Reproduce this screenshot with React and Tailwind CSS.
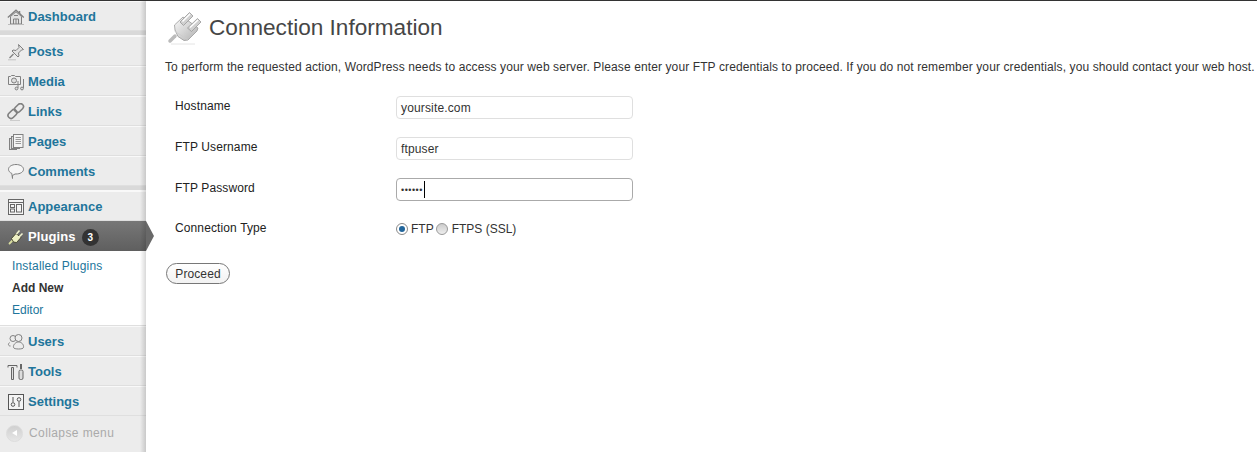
import React from 'react';

const stroke = '#808080';

const HomeIcon = () => (
  <svg width="18" height="18" viewBox="0 0 18 18" fill="none" stroke={stroke}>
    <path d="M.8 9.500 9 2.200l7.800 7.300" strokeWidth="1.300" />
    <path d="M12.500 3v3" strokeWidth="1.500" />
    <path d="M3.500 8.500v7.500h11V8.500L9 3.800z" fill="#e2e2e2" />
    <path d="M6.500 16v-5h5v5M9 11v5M7 7.500h4" />
    <path d="M1 16.500h16" stroke="#bbb" />
  </svg>
);
const PinIcon = () => (
  <svg width="18" height="18" viewBox="0 0 18 18" fill="none" stroke={stroke}>
    <path d="M11.500 1.500 16.500 6.500l-2 .5-3 3 .5 3-1 1-6-6 1-1 3 .5 3-3z" fill="#e2e2e2" />
    <path d="M6.500 11 2.500 15" strokeWidth="1.300" />
    <path d="M1 16.800h8" stroke="#c4c4c4" />
  </svg>
);
const MediaIcon = () => (
  <svg width="18" height="18" viewBox="0 0 18 18" fill="none" stroke={stroke}>
    <path d="M1.500 3.500h2l1-1h3l1 1h5v8h-12z" fill="#eee" />
    <circle cx="7" cy="7.500" r="2.500" fill="#ddd" />
    <path d="M16.500 6v9M11 8v7" />
    <circle cx="9.500" cy="15.500" r="1.400" fill="#ddd" />
    <circle cx="15" cy="15.500" r="1.400" fill="#ddd" />
  </svg>
);
const LinkIcon = () => (
  <svg width="20" height="18" viewBox="0 0 20 18" fill="none" stroke={stroke} strokeWidth="1.600">
    <rect x="10" y="0" width="6" height="10" rx="3" transform="rotate(45 13 5)" />
    <rect x="3.500" y="6" width="6" height="10" rx="3" transform="rotate(45 6.500 11)" />
    <path d="M4 17.500h10" stroke="#ccc" strokeWidth="1" />
  </svg>
);
const PagesIcon = () => (
  <svg width="16" height="16" viewBox="0 0 16 16" fill="none" stroke={stroke}>
    <rect x="1.500" y="4.500" width="7" height="11" fill="#ddd" />
    <rect x="3.500" y="2.500" width="8" height="12" fill="#ddd" />
    <rect x="5.500" y="0.500" width="9.500" height="13" fill="#f4f4f4" />
    <path d="M7.500 3.500h5.500M7.500 5.500h5.500M7.500 7.500h5.500M7.500 9.500h5.500" stroke="#999" />
  </svg>
);
const CommentIcon = () => (
  <svg width="18" height="18" viewBox="0 0 18 18" fill="none" stroke={stroke}>
    <path d="M9 1.500c4.200 0 7.500 2.100 7.500 4.800S13.200 11 9 11H8l-2.500 1.500v3L4.800 10.400C2.800 9.600 1.500 8.100 1.500 6.300 1.500 3.600 4.800 1.500 9 1.500z" fill="#f6f6f6" />
  </svg>
);
const AppearanceIcon = () => (
  <svg width="16" height="16" viewBox="0 0 16 16" fill="none" stroke="#666">
    <rect x="0.500" y="0.500" width="15" height="15" fill="#f4f4f4" />
    <path d="M.5 3.500h15" />
    <rect x="2.500" y="5.500" width="4" height="3" />
    <rect x="2.500" y="10" width="4" height="3" />
    <rect x="8.500" y="5.500" width="5" height="7.500" />
  </svg>
);
const SmallPlugIcon = () => (
  <svg width="16" height="16" viewBox="0 0 16 16" fill="none" stroke="#33331c" strokeWidth="0.800">
    <path d="M1.500 14.500 5 11" stroke="#d9dea0" strokeWidth="1.800" strokeLinecap="round" />
    <path d="M3.500 9.500 8 4.500l5 4-4.500 5-3 -.5z" fill="#eef0c4" />
    <path d="M8.500 5 11.500 1.500" stroke="#f2f4d0" strokeWidth="1.600" />
    <path d="M11 8 14.500 4.500" stroke="#f2f4d0" strokeWidth="1.600" />
  </svg>
);
const UsersIcon = () => (
  <svg width="18" height="18" viewBox="0 0 18 18" fill="none" stroke={stroke}>
    <circle cx="6" cy="5.500" r="3" fill="#ececec" />
    <circle cx="11.500" cy="5" r="3.500" fill="#ececec" />
    <path d="M2.500 9.500C1 11 1 13 3.500 13M11.500 9c3 0 5.500 2.500 5 5.500-.3 2-9.500 2-10 0-.6-2.500 2-5.500 5-5.500z" fill="#ececec" />
  </svg>
);
const ToolsIcon = () => (
  <svg width="18" height="18" viewBox="0 0 18 18" fill="none" stroke="#666">
    <path d="M1 2.500h9M1 2.500v2M10 2.500v2M4.500 4.500h2V16.500h-2z" fill="#ddd" />
    <path d="M14 1v5" strokeWidth="2" />
    <rect x="12" y="7" width="4" height="9.500" rx="1.500" fill="#ddd" />
  </svg>
);
const SettingsIcon = () => (
  <svg width="16" height="16" viewBox="0 0 16 16" fill="none" stroke="#555">
    <rect x="0.500" y="0.500" width="15" height="15" fill="#f4f4f4" />
    <path d="M5 3v5M11 8v5" />
    <circle cx="5" cy="10.500" r="1.800" />
    <circle cx="11" cy="5.500" r="1.800" />
  </svg>
);
const BigPlugIcon = () => (
  <svg width="36" height="36" viewBox="2 4 36 36" fill="none" stroke="#999" strokeWidth="0.800">
    <defs>
      <linearGradient id="plugBody" x1="0" y1="0" x2="1" y2="1">
        <stop offset="0" stopColor="#fafafa" />
        <stop offset="1" stopColor="#b0b0b0" />
      </linearGradient>
    </defs>
    <path d="M5 33 10 28" stroke="#bbb" strokeWidth="3.500" strokeLinecap="round" />
    <path d="M9.500 17 18 9l15 11-1 3-9 9-4 .5-6-4-3-6.500z" fill="url(#plugBody)" />
    <path d="M9.500 23 23 32" stroke="#ccc" />
    <path d="M15 14 24.500 4.500l3.500 3.500-9.500 9.500z" fill="#d0d0d0" />
    <path d="M17.500 13.500 25 6" stroke="#fff" strokeWidth="1.400" />
    <path d="M22.500 20 32.500 10.500l3.500 3.500-9.500 9.500z" fill="#d0d0d0" />
    <path d="M25 19.500 33 12" stroke="#fff" strokeWidth="1.400" />
    <path d="M6 36h24" stroke="#e4e4e4" strokeWidth="1" />
  </svg>
);

const topItems = [
  { label: 'Dashboard', icon: <HomeIcon /> },
];
const contentItems = [
  { label: 'Posts', icon: <PinIcon /> },
  { label: 'Media', icon: <MediaIcon /> },
  { label: 'Links', icon: <LinkIcon /> },
  { label: 'Pages', icon: <PagesIcon /> },
  { label: 'Comments', icon: <CommentIcon /> },
];
const lowerItems = [
  { label: 'Users', icon: <UsersIcon /> },
  { label: 'Tools', icon: <ToolsIcon /> },
  { label: 'Settings', icon: <SettingsIcon /> },
];

function MenuItem({ label, icon }) {
  return (
    <div className="flex h-[30px] items-center border-t border-t-[#f9f9f9] border-b border-b-[#dfdfdf] pt-[2px]">
      <div className="flex w-7 shrink-0 justify-center pl-[3px]">{icon}</div>
      <span className="text-[13px] font-bold text-[#21759b]">{label}</span>
    </div>
  );
}

function Separator() {
  return <div className="h-[5px] border-b border-b-[#f9f9f9] bg-[#d9d9d9]" />;
}

function Field({ label, value, focused }) {
  return (
    <div className="flex h-[41px] items-start">
      <div className="w-[231px] pt-[2px] pl-[10px] text-xs tracking-[0.12px] text-[#222]">{label}</div>
      <div className={`flex h-[23px] w-[237px] items-center rounded-[4px] border bg-white px-[4px] text-xs tracking-[0.15px] text-[#333] ${focused ? 'border-[#aaa]' : 'border-[#dfdfdf]'}`}>
        {value}
        {focused && <span className="ml-px h-[17px] w-px bg-black" />}
      </div>
    </div>
  );
}

export default function App() {
  return (
    <div className="flex h-[452px] w-[1257px] overflow-hidden border-t border-t-[#333] bg-white font-['Liberation_Sans',Arial,sans-serif]">
      <aside className="relative z-10 flex w-[146px] shrink-0 flex-col bg-[#ececec]">
        {topItems.map((item) => <MenuItem key={item.label} {...item} />)}
        <Separator />
        {contentItems.map((item) => <MenuItem key={item.label} {...item} />)}
        <Separator />
        <MenuItem label="Appearance" icon={<AppearanceIcon />} />

        <div className="relative flex h-[30px] items-center bg-gradient-to-b from-[#777] to-[#5f5f5f] pt-[2px]">
          <div className="flex w-7 shrink-0 justify-center pl-[3px]"><SmallPlugIcon /></div>
          <span className="text-[13px] font-bold tracking-[0.1px] text-white">Plugins</span>
          <span className="ml-[6px] flex h-[17px] w-[17px] items-center justify-center rounded-full bg-[#333] text-[10px] font-bold text-white">3</span>
          <div className="absolute top-0 left-full h-0 w-0 border-y-[15px] border-l-[8px] border-y-transparent border-l-[#696969]" />
        </div>

        <div className="flex h-[75px] flex-col border-b border-b-[#dfdfdf] bg-white pt-[4px] pl-3 text-xs leading-[22px]">
          <span className="tracking-[0.18px] text-[#21759b]">Installed Plugins</span>
          <span className="font-bold text-[#333]">Add New</span>
          <span className="text-[#21759b]">Editor</span>
        </div>

        {lowerItems.map((item) => <MenuItem key={item.label} {...item} />)}

        <div className="flex h-[30px] items-center pt-[4px]">
          <div className="ml-[6px] flex h-[17px] w-[17px] items-center justify-center rounded-full border border-[#ddd] bg-gradient-to-b from-[#d0d0d0] to-[#e6e6e6]">
            <div className="h-0 w-0 border-y-[3px] border-r-[5px] border-y-transparent border-r-white" />
          </div>
          <span className="ml-[6px] text-xs tracking-[0.4px] text-[#aaa]">Collapse menu</span>
        </div>

        {/* soft edge on the right of the menu */}
        <div className="pointer-events-none absolute inset-y-0 right-0 w-[6px] bg-gradient-to-r from-transparent to-black/15" />
      </aside>

      <main className="min-w-0 flex-1 pl-[19px]">
        <div className="flex h-[58px] items-center pb-[4px]">
          <div className="ml-[2px] flex w-[42px] shrink-0 pt-[3px]"><BigPlugIcon /></div>
          <h2 className="text-[22.6px] leading-none text-[#464646]">Connection Information</h2>
        </div>
        <p className="whitespace-nowrap text-xs tracking-[0.11px] text-[#333]">
          To perform the requested action, WordPress needs to access your web server. Please enter your FTP credentials to proceed. If you do not remember your credentials, you should contact your web host.
        </p>

        <div className="mt-[21px]">
          <Field label="Hostname" value="yoursite.com" />
          <Field label="FTP Username" value="ftpuser" />
          <Field label="FTP Password" value={<span className="tracking-[0.5px] text-[9px]">••••••</span>} focused />
          <div className="flex h-[36px] items-start">
            <div className="w-[231px] pt-px pl-[10px] text-xs tracking-[0.12px] text-[#222]">Connection Type</div>
            <div className="flex items-center pt-[2px] text-xs text-[#333]">
              <span className="flex h-[12px] w-[12px] items-center justify-center rounded-full border border-[#888] bg-white">
                <span className="h-[6px] w-[6px] rounded-full bg-[#21659b]" />
              </span>
              <span className="ml-[3px]">FTP</span>
              <span className="ml-[2px] h-[12px] w-[12px] rounded-full border border-[#999] bg-gradient-to-b from-[#ccc] to-[#eee]" />
              <span className="ml-[4px]">FTPS (SSL)</span>
            </div>
          </div>
        </div>

        <button className="mt-[8px] ml-px flex h-[21px] w-[64px] items-center justify-center rounded-full border border-[#777] bg-gradient-to-b from-white to-[#f2f2f2] text-xs tracking-[0.1px] text-[#333]">
          Proceed
        </button>
      </main>
    </div>
  );
}
